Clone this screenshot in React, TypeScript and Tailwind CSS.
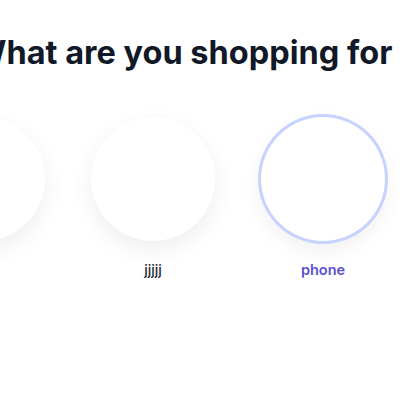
const items = [
  { name: "", active: false },
  { name: "jjjjj", active: false },
  { name: "phone", active: true },
  { name: "", active: false },
];

export default function App() {
  return (
    <div className="w-[400px] h-[400px] overflow-hidden bg-white font-['Inter',sans-serif]">
      {/* Heading */}
      <div className="flex justify-center pt-[33px] pr-[9px]">
        <h1 className="whitespace-nowrap text-[32.5px] leading-[40px] font-bold text-[#111827]">
          What are you shopping for ?
        </h1>
      </div>

      {/* Categories */}
      <div className="flex gap-[46px] ml-[-79px] mt-[44px]">
        {items.map((item, i) => (
          <div key={i} className="flex flex-col items-center shrink-0 w-[124px]">
            <div
              className={
                item.active
                  ? "w-[124px] h-[124px] rounded-full bg-white shadow-[0_8px_22px_rgba(0,0,0,0.07)] ring-[3px] ring-[#c7d2fe]"
                  : "w-[124px] h-[124px] rounded-full bg-white shadow-[0_8px_22px_rgba(0,0,0,0.07)]"
              }
            />
            <span
              className={
                item.active
                  ? "mt-[19px] text-[14.5px] leading-5 font-semibold text-[#5b4fd1]"
                  : "mt-[19px] text-[14px] leading-5 font-medium text-[#1f2937]"
              }
            >
              {item.name}
            </span>
          </div>
        ))}
      </div>
    </div>
  );
}
